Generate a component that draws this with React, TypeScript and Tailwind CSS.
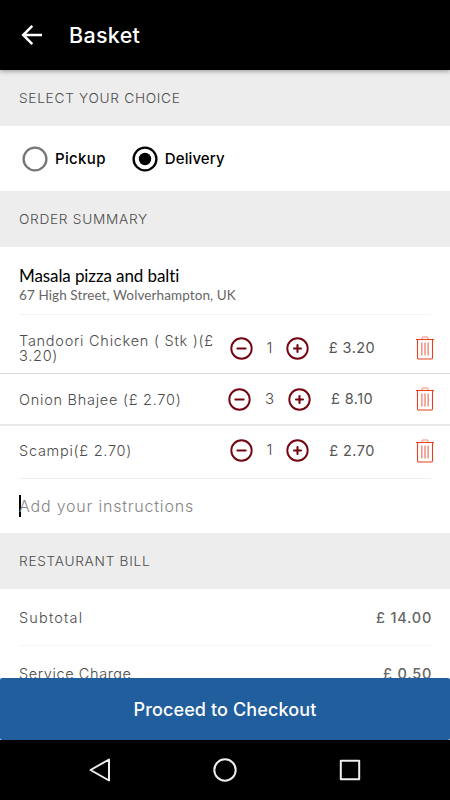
type Item = { id: string; name: string; qty: number; price: string; rowClass: string; qtyClass: string };
type BillLine = { label: string; amount: string; labelClass: string; rowClass: string };

const ITEMS: Item[] = [
  { id: "tandoori", name: "Tandoori Chicken ( Stk )(£ 3.20)", qty: 1, price: "£ 3.20", rowClass: "h-[59px] border-b border-[#dadada] pt-[8px]", qtyClass: "w-[33px]" },
  { id: "bhajee", name: "Onion Bhajee (£ 2.70)", qty: 3, price: "£ 8.10", rowClass: "h-[52px] border-b-2 border-[#e8e8e8]", qtyClass: "w-[37px]" },
  { id: "scampi", name: "Scampi(£ 2.70)", qty: 1, price: "£ 2.70", rowClass: "h-[52px] pb-[3px]", qtyClass: "w-[33px]" },
];

const BILL: BillLine[] = [
  { label: "Subtotal", amount: "£ 14.00", labelClass: "tracking-[1.15px]", rowClass: "pt-px" },
  { label: "Service Charge", amount: "£ 0.50", labelClass: "tracking-[0.6px]", rowClass: "pb-px" },
];

function SectionTitle({ children }: { children: string }) {
  return <h2 className="flex h-14 shrink-0 items-center bg-[#ededed] px-[19px] pt-px text-[13.7px] font-light tracking-[0.7px] text-[#4c4c4c]">{children}</h2>;
}

function StepButton({ plus }: { plus?: boolean }) {
  return (
    <button aria-label={plus ? "Add one" : "Remove one"} className="h-[23px] w-[23px] shrink-0">
      <svg viewBox="0 0 23 23" className="h-full w-full" fill="none" stroke="#730511">
        <circle cx="11.5" cy="11.5" r="10.2" strokeWidth="1.9" />
        <path d={plus ? "M8 11.5h7M11.5 8v7" : "M7.4 11.5h8.2"} strokeWidth="2.1" strokeLinecap="round" />
      </svg>
    </button>
  );
}

function TrashIcon() {
  return (
    <svg viewBox="0 0 18 24" className="block h-6 w-[18px] shrink-0" fill="none" stroke="#e8411f">
      <path d="M0 3.5h18" strokeWidth="1.1" />
      <path d="M1.5 3.5v18.2q0 1.3 1.3 1.3h12.4q1.3 0 1.3-1.3V3.5" strokeWidth="1.1" />
      <path d="M6 3V1.8Q6 1 6.8 1h4.4q.8 0 .8.8V3" stroke="#ef8874" />
      <path d="M5.8 6.5v13M9 6.5v13M12.2 6.5v13" stroke="#f0998b" strokeWidth="1.6" />
    </svg>
  );
}

function Radio({ label, checked }: { label: string; checked?: boolean }) {
  return (
    <label className="flex items-center gap-[7px]">
      <svg viewBox="0 0 26 26" className="h-[26px] w-[26px]" fill="none">
        <circle cx="13" cy="13" r="11.4" stroke={checked ? "#000" : "#757575"} strokeWidth="2.3" />
        {checked && <circle cx="13" cy="13" r="6.2" fill="#000" />}
      </svg>
      <span className={`pt-px text-[15px] font-medium text-black ${checked ? "tracking-[0.1px]" : "tracking-[0.35px]"}`}>{label}</span>
    </label>
  );
}

export default function App() {
  return (
    <div className="flex h-[800px] w-[450px] flex-col overflow-hidden bg-white font-['Inter',sans-serif]">
      <header className="z-10 flex h-[70px] shrink-0 items-center bg-black pl-[21px] text-white shadow-[0_1px_5px_rgba(0,0,0,0.4)]">
        <svg viewBox="0 0 22 20" className="h-5 w-[22px]" fill="none" stroke="#fff" strokeWidth="2.5">
          <path d="M21 10H2M11.3 .9L2.2 10l9.1 9.1" />
        </svg>
        <h1 className="ml-[26px] text-[21.5px] font-medium tracking-[0.3px]">Basket</h1>
      </header>

      <main className="flex min-h-0 flex-1 flex-col overflow-hidden">
        <SectionTitle>SELECT YOUR CHOICE</SectionTitle>
        <div className="flex h-[65px] shrink-0 items-center gap-[26px] pl-[22px]">
          <Radio label="Pickup" />
          <Radio label="Delivery" checked />
        </div>

        <SectionTitle>ORDER SUMMARY</SectionTitle>
        <div className="mx-[19px] h-[68px] shrink-0 border-b border-[#f3f3f3] pt-[18px] font-['Lato',sans-serif] [font-variant-ligatures:none]">
          <p className="text-[17px] leading-[21px] tracking-[-0.1px] text-black">Masala pizza and balti</p>
          <p className="text-[13.5px] leading-[19px] tracking-[0.1px] text-[#666]">67 High Street, Wolverhampton, UK</p>
        </div>

        {ITEMS.map(item => (
          <div key={item.id} className={`flex shrink-0 items-center pr-4 pl-[19px] ${item.rowClass}`}>
            <p className="w-[200px] text-[14.5px] leading-[15px] font-light tracking-[0.74px] text-[#4c4c4c]">{item.name}</p>
            <div className="flex w-[101px] items-center justify-center">
              <StepButton />
              <span className={`text-center text-[15px] font-light text-[#4c4c4c] ${item.qtyClass}`}>{item.qty}</span>
              <StepButton plus />
            </div>
            <span className="w-16 text-center text-[14.5px] tracking-[0.45px] whitespace-nowrap text-[#555]">{item.price}</span>
            <button aria-label="Delete" className="ml-auto"><TrashIcon /></button>
          </div>
        ))}

        <div className="mx-[19px] flex h-[55px] shrink-0 items-center border-t border-[#efefef]">
          <span className="h-[22px] w-[2px] bg-black" />
          <span className="-ml-[2px] text-[16px] font-light tracking-[0.8px] text-[#858585]">Add your instructions</span>
        </div>

        <SectionTitle>RESTAURANT BILL</SectionTitle>
        {BILL.map(line => (
          <div key={line.label} className={`mx-[19px] flex h-[57px] shrink-0 items-center justify-between border-b border-[#f5f5f5] text-[14.5px] ${line.rowClass}`}>
            <span className={`font-light text-[#4c4c4c] ${line.labelClass}`}>{line.label}</span>
            <span className="-mr-px font-medium tracking-[0.75px] text-[#666]">{line.amount}</span>
          </div>
        ))}
      </main>

      <button className="h-[62px] shrink-0 rounded-[2px] bg-[#215e9e] text-[18px] font-medium tracking-[0.12px] text-white">Proceed to Checkout</button>

      <nav className="flex h-[60px] shrink-0 items-center justify-around bg-black px-[37px]">
        <svg viewBox="0 0 24 24" className="h-6 w-6" fill="none" stroke="#eee" strokeWidth="2" strokeLinejoin="round"><path d="M21 1.5v21L2.5 12z" /></svg>
        <svg viewBox="0 0 24 24" className="h-6 w-6" fill="none" stroke="#eee" strokeWidth="2"><circle cx="12" cy="12" r="10.7" /></svg>
        <svg viewBox="0 0 24 24" className="h-6 w-6" fill="none" stroke="#eee" strokeWidth="2" strokeLinejoin="round"><path d="M2.8 2.8h18.4v18.4H2.8z" /></svg>
      </nav>
    </div>
  );
}
